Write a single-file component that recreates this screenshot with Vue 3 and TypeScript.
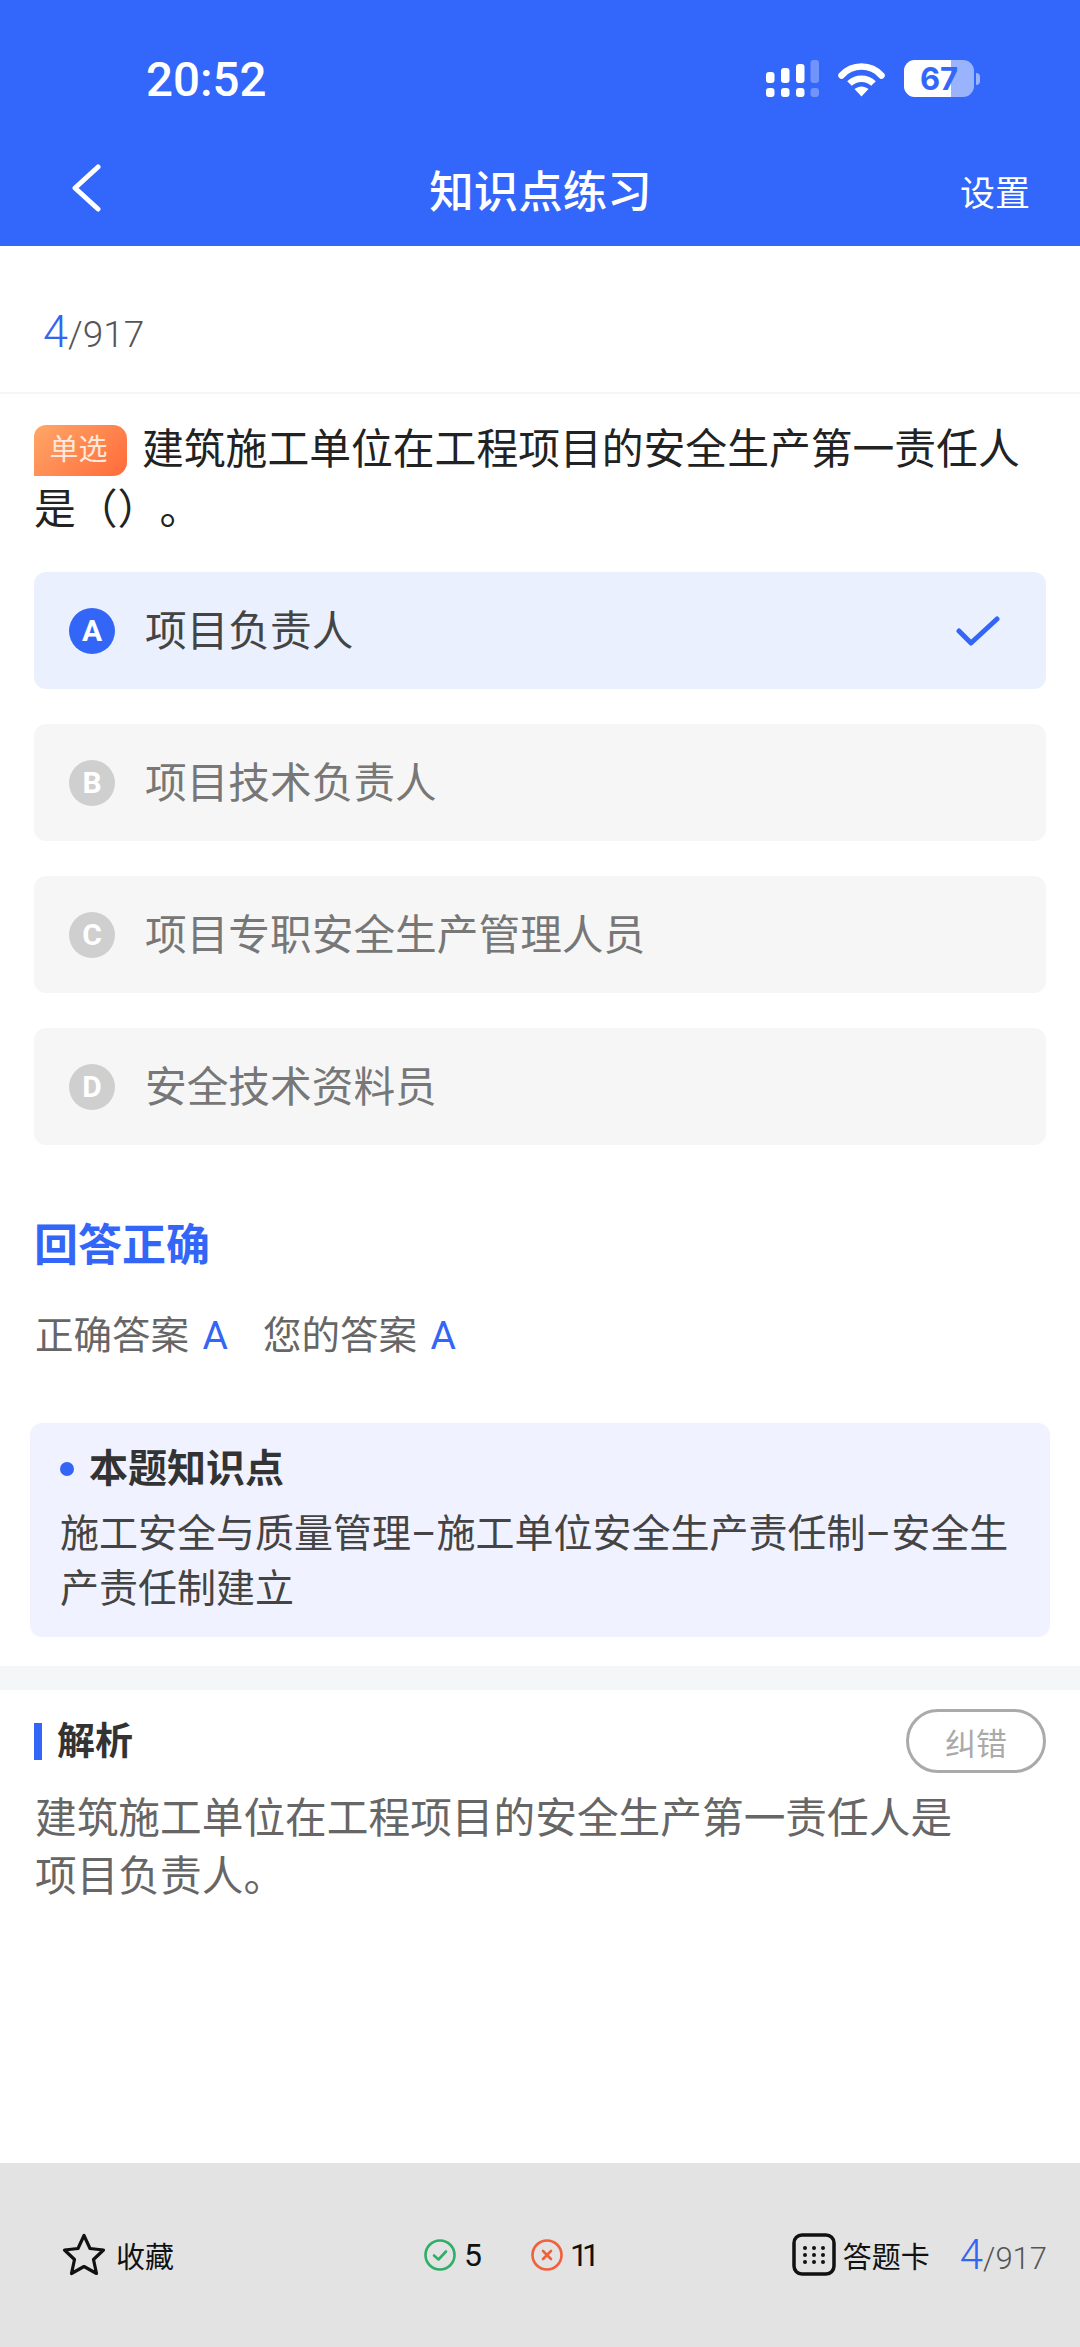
<template>
  <div class="page">
    <header class="top">
      <div class="status">
        <span class="time">20:52</span>
        <div class="status-icons">
          <svg class="signal" width="54" height="38" viewBox="0 0 54 38" fill="#fff">
            <rect x="0" y="12" width="8.5" height="11" rx="3" />
            <rect x="15" y="8" width="8.5" height="15" rx="3" />
            <rect x="30" y="4" width="8.5" height="19" rx="3" />
            <rect x="44.500" y="0" width="8.500" height="23" rx="3" opacity=".3" />
            <rect x="0" y="28" width="8.5" height="9" rx="3" />
            <rect x="15" y="28" width="8.5" height="9" rx="3" />
            <rect x="30" y="28" width="8.5" height="9" rx="3" />
            <rect x="44.500" y="28" width="8.500" height="9" rx="3" opacity=".3" />
          </svg>
          <svg class="wifi" width="47" height="35" viewBox="0 0 47 35" fill="none" stroke="#fff" stroke-width="6.500" stroke-linecap="round">
            <path d="M3.500 13.500C14 1.500 33 1.500 43.500 13.500" />
            <path d="M11.500 21.500C18 15 29 15 35.500 21.500" stroke-linecap="butt" />
            <path d="M16.500 27L23.500 34.500L30.500 27C26 23.500 21 23.500 16.500 27Z" fill="#fff" stroke="none" />
          </svg>
          <div class="battery">
            <div class="battery-body">
              <div class="battery-fill"></div>
              <span>67</span>
            </div>
            <div class="battery-cap"></div>
          </div>
        </div>
      </div>
      <nav class="nav">
        <svg class="back" width="30" height="48" viewBox="0 0 30 48" fill="none" stroke="#fff" stroke-width="5" stroke-linecap="round" stroke-linejoin="round">
          <path d="M27 3L4 24L27 45" />
        </svg>
        <span class="nav-title">知识点练习</span>
        <span class="nav-action">设置</span>
      </nav>
    </header>

    <main class="main">
      <div class="count">
        <span class="count-cur">4</span><span class="count-total">/917</span>
      </div>

      <div class="question"><span class="tag">单选</span>建筑施工单位在工程项目的安全生产第一责任人是（）。</div>

      <div class="options">
        <div
          v-for="opt in options"
          :key="opt.key"
          class="option"
          :class="{ active: opt.key === 'A' }"
        >
          <span class="letter">{{ opt.key }}</span>
          <span class="opt-text">{{ opt.text }}</span>
          <svg v-if="opt.key === 'A'" class="check" width="44" height="30" viewBox="0 0 44 30" fill="none" stroke="#3366f6" stroke-width="5" stroke-linecap="round" stroke-linejoin="round">
            <path d="M3 15L15 27L41 3" />
          </svg>
        </div>
      </div>

      <h2 class="result">回答正确</h2>
      <div class="answers">
        <span>正确答案 <b>A</b></span>
        <span>您的答案 <b>A</b></span>
      </div>

      <section class="point">
        <div class="point-title"><i class="dot"></i>本题知识点</div>
        <p class="point-text">施工安全与质量管理–施工单位安全生产责任制–安全生产责任制建立</p>
      </section>

      <div class="divider"></div>

      <section class="analysis">
        <div class="analysis-head">
          <span class="analysis-title">解析</span>
          <button class="report">纠错</button>
        </div>
        <p class="analysis-text">建筑施工单位在工程项目的安全生产第一责任人是项目负责人。</p>
      </section>
    </main>

    <footer class="bottom">
      <div class="fav">
        <svg width="44" height="43" viewBox="0 0 44 43" fill="none" stroke="#111" stroke-width="3.200" stroke-linejoin="round">
          <path d="M22 2.500L28 15.500L41.500 17L31.500 26.500L34.500 40.500L22 33.500L9.500 40.500L12.500 26.500L2.500 17L16 15.500Z" />
        </svg>
        <span>收藏</span>
      </div>
      <div class="stats">
        <div class="stat">
          <svg width="32" height="32" viewBox="0 0 32 32" fill="none" stroke="#2fae68" stroke-width="2.600" stroke-linecap="round" stroke-linejoin="round">
            <circle cx="16" cy="16" r="14.500" />
            <path d="M10 16.500L14.500 20.500L22 12.500" />
          </svg>
          <span>5</span>
        </div>
        <div class="stat">
          <svg width="32" height="32" viewBox="0 0 32 32" fill="none" stroke="#f0603a" stroke-width="2.600" stroke-linecap="round">
            <circle cx="16" cy="16" r="14.500" />
            <path d="M12 12L20 20M20 12L12 20" />
          </svg>
          <span class="narrow">11</span>
        </div>
      </div>
      <div class="card">
        <svg width="44" height="43" viewBox="0 0 44 43" fill="#111">
          <rect x="2" y="2" width="40" height="39" rx="8" fill="none" stroke="#111" stroke-width="3.500" />
          <circle v-for="d in dots" :key="d.x + '-' + d.y" :cx="d.x" :cy="d.y" r="2" />
        </svg>
        <span>答题卡</span>
      </div>
      <div class="foot-count">
        <span class="foot-cur">4</span><span class="foot-total">/917</span>
      </div>
    </footer>
  </div>
</template>

<script setup lang="ts">
const options = [
  { key: "A", text: "项目负责人" },
  { key: "B", text: "项目技术负责人" },
  { key: "C", text: "项目专职安全生产管理人员" },
  { key: "D", text: "安全技术资料员" },
];

const dots: { x: number; y: number }[] = [];
for (const y of [15, 22, 29]) {
  for (const x of [13, 22, 31]) {
    dots.push({ x, y });
  }
}
</script>

<style scoped>
.page {
  width: 1080px;
  height: 2347px;
  display: flex;
  flex-direction: column;
  background: #fff;
  font-family: Roboto, "Noto Sans CJK SC", sans-serif;
  overflow: hidden;
}

.top {
  height: 246px;
  background: #3366fa;
  color: #fff;
  flex: none;
}

.status {
  height: 134px;
  padding: 60px 100px 0 146px;
  box-sizing: border-box;
  display: flex;
  justify-content: space-between;
  align-items: flex-start;
}

.time {
  font-size: 47.500px;
  font-weight: 500;
  line-height: 40px;
}

.status-icons {
  display: flex;
  align-items: flex-start;
}

.wifi {
  margin: 2px 0 0 18px;
}

.battery {
  display: flex;
  align-items: center;
  margin-left: 19px;
}

.battery-body {
  position: relative;
  width: 70px;
  height: 37px;
  border-radius: 11px;
  background: rgba(255, 255, 255, 0.5);
  overflow: hidden;
  text-align: center;
}

.battery-fill {
  position: absolute;
  left: 0;
  top: 0;
  bottom: 0;
  width: 47px;
  background: #fff;
}

.battery-body span {
  position: relative;
  font-family: Inter, sans-serif;
  font-size: 31px;
  font-weight: 700;
  line-height: 37px;
  color: #3366fa;
}

.battery-cap {
  width: 4px;
  height: 12px;
  margin-left: 2px;
  border-radius: 0 4px 4px 0;
  background: rgba(255, 255, 255, 0.5);
}

.nav {
  height: 112px;
  display: flex;
  align-items: center;
  justify-content: space-between;
  padding: 0 50px 4px 71px;
  box-sizing: border-box;
}

.nav-title {
  font-size: 44.500px;
  font-weight: 500;
  margin-left: 20px;
}

.nav-action {
  font-size: 35px;
  padding-top: 4px;
}

.main {
  flex: 1;
  min-height: 0;
}

.count {
  height: 148px;
  box-sizing: border-box;
  border-bottom: 2px solid #f6f6f6;
  padding: 61px 0 0 43px;
  line-height: 50px;
}

.count-cur {
  font-size: 45px;
  font-weight: 300;
  color: #3366f0;
}

.count-total {
  font-size: 37px;
  font-weight: 300;
  color: #555;
}

.question {
  margin: 26px 34px 0;
  font-size: 41.800px;
  line-height: 60px;
  color: #222;
  text-spacing-trim: space-all;
}

.tag {
  position: relative;
  top: -3px;
  display: inline-block;
  width: 93px;
  height: 51px;
  margin-right: 15px;
  border-radius: 12px 14px 14px 0;
  background: linear-gradient(135deg, #ffa768, #ff6a3a);
  color: #ffe9dc;
  font-size: 29px;
  line-height: 51px;
  text-align: center;
  text-indent: -4px;
  vertical-align: 1px;
}

.options {
  margin: 32px 34px 0;
  display: flex;
  flex-direction: column;
  gap: 35px;
}

.option {
  height: 117px;
  display: flex;
  align-items: center;
  padding: 0 46px 0 35px;
  border-radius: 12px;
  background: #f6f6f6;
  color: #777;
  font-size: 41.700px;
}

.option.active {
  background: #ebf0fe;
  color: #444;
}

.letter {
  width: 46px;
  height: 46px;
  margin-right: 30px;
  border-radius: 50%;
  background: #cfcfcf;
  color: #fff;
  font-size: 30px;
  font-weight: 700;
  line-height: 46px;
  text-align: center;
  flex: none;
}

.active .letter {
  background: #3366f6;
}

.opt-text {
  flex: 1;
  margin-top: -5px;
}

.result {
  margin: 71px 34px 0;
  font-size: 44px;
  font-weight: 700;
  line-height: 60px;
  color: #3366f6;
}

.answers {
  margin: 30px 35px 0;
  display: flex;
  gap: 35px;
  font-size: 38.500px;
  line-height: 60px;
  color: #666;
}

.answers b {
  font-weight: 400;
  font-size: 39px;
  color: #3366f6;
  margin-left: 4px;
}

.point {
  margin: 57px 30px 0;
  height: 214px;
  box-sizing: border-box;
  padding: 20px 30px 0;
  border-radius: 12px;
  background: #f0f3ff;
}

.point-title {
  display: flex;
  align-items: center;
  font-size: 39px;
  font-weight: 700;
  line-height: 52px;
  color: #333;
}

.dot {
  width: 14px;
  height: 14px;
  margin-right: 15px;
  border-radius: 50%;
  background: #3366f6;
}

.point-text {
  margin: 12px 0 0;
  font-size: 39px;
  line-height: 55px;
  color: #444;
}

.divider {
  height: 24px;
  margin-top: 29px;
  background: #f4f7f8;
}

.analysis {
  padding: 19px 34px 0;
}

.analysis-head {
  display: flex;
  align-items: center;
  justify-content: space-between;
}

.analysis-title {
  border-left: 8px solid #3366f6;
  padding-left: 15px;
  font-size: 38px;
  font-weight: 700;
  line-height: 37px;
  color: #333;
}

.report {
  width: 140px;
  height: 64px;
  padding: 0;
  border: 3px solid #aaa;
  border-radius: 32px;
  background: #fff;
  color: #aaa;
  font-family: inherit;
  font-size: 31px;
}

.analysis-text {
  margin: 17px 0 0 1px;
  max-width: 930px;
  font-size: 41.700px;
  line-height: 58px;
  color: #666;
}

.bottom {
  height: 184px;
  flex: none;
  display: flex;
  align-items: center;
  padding: 0 33px 0 62px;
  box-sizing: border-box;
  background: #e3e3e3;
  color: #111;
  font-size: 29px;
}

.bottom svg {
  flex: none;
}

.fav,
.card,
.stat {
  display: flex;
  align-items: center;
}

.bottom > * {
  margin-top: -1px;
}

.fav span {
  margin-left: 10px;
}

.stats {
  display: flex;
  gap: 49px;
  margin-left: 250px;
  font-size: 32px;
}

.stat span {
  margin-left: 8px;
}

.stat .narrow {
  letter-spacing: -6px;
  margin-left: 7px;
}

.card {
  margin-left: auto;
}

.card span {
  margin-left: 7px;
}

.foot-count {
  margin-left: 30px;
}

.foot-cur {
  font-size: 42px;
  font-weight: 300;
  color: #3366f0;
}

.foot-total {
  font-size: 31px;
  font-weight: 300;
  color: #555;
}
</style>

<style>
body {
  margin: 0;
}
</style>
